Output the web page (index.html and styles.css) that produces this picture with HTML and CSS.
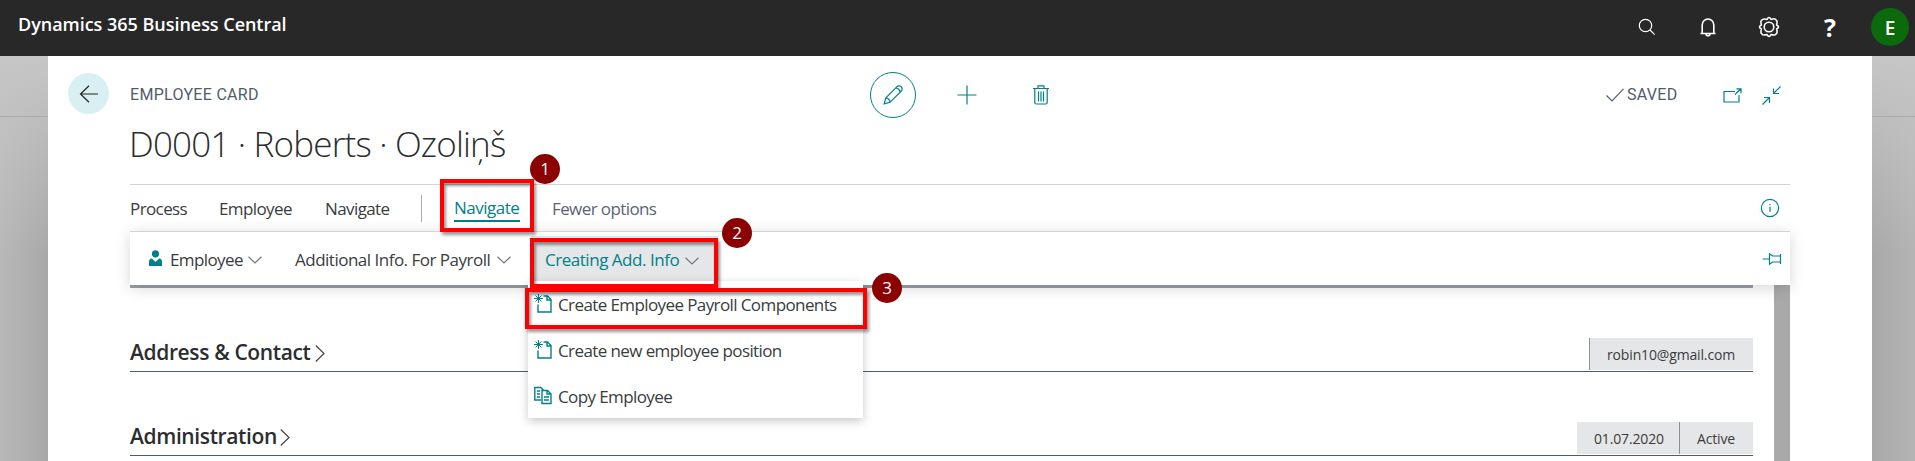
FILE: index.html
```
<!DOCTYPE html>
<html lang="en">
<head>
<meta charset="utf-8">
<title>Dynamics 365 Business Central</title>
<link rel="stylesheet" href="styles.css">
</head>
<body>
<header class="topbar">
  <span class="brand">Dynamics 365 Business Central</span>
  <div class="tools">
    <svg width="22" height="22" viewBox="0 0 22 22"><circle cx="9.5" cy="9.5" r="6.2"/><path d="M14 14l4.7 4.7"/></svg>
    <svg width="22" height="22" viewBox="0 0 22 22"><path class="bold" d="M3.500 17.500h15M5.200 17V9a5.800 6 0 0 1 11.600 0v8M9 17.800a2 2 0 0 0 4 0"/></svg>
    <svg width="22" height="22" viewBox="0 0 22 22"><circle class="bold" cx="11" cy="11" r="4.800"/><path class="bold" stroke-linejoin="round" d="M9 3.400Q11-.4 13 3.400 17.200 2 18 4 19.800 4.600 18.600 9 22.400 11 18.600 13 19.800 17.200 18 18 17.200 19.800 13 18.600 11 22.400 9 18.600 4.800 19.800 4 18 2.200 17.200 3.400 13-.4 11 3.400 9 2.200 4.800 4 4 4.800 2.200 9 3.400z"/></svg>
    <span class="help">?</span>
    <span class="avatar">E</span>
  </div>
</header>
<div class="backdrop">
  <main class="card">
    <div class="titlebar">
      <button class="back"><svg width="20" height="18" viewBox="0 0 20 18"><path d="M19 9H1.5M10 .7 1.5 9 10 17.3"/></svg></button>
      <span class="caption">EMPLOYEE CARD</span>
      <div class="actions">
        <span class="edit"><svg width="20" height="20" viewBox="0 0 20 20"><path d="M1.2 18.8 2.7 13 14 1.7a2.8 2.8 0 0 1 4 0l.3.3a2.8 2.8 0 0 1 0 4L7 17.3zM2.7 13c2.3 0 4.3 2 4.3 4.3M12.700 3c2.300 0 4.300 2 4.300 4.300"/></svg></span>
        <svg class="plus" width="20" height="20" viewBox="0 0 20 20"><path d="M10 .5v19M.5 10h19"/></svg>
        <svg class="trash" width="18" height="20" viewBox="0 0 18 20"><path d="M1 3.5h16M6 3V.8h6V3M2.8 4v13.5q0 1.5 1.5 1.5h9.4q1.5 0 1.5-1.5V4M6.5 6.5v10M9 6.5v10M11.500 6.500v10"/></svg>
      </div>
      <div class="status">
        <svg class="check" width="18" height="14" viewBox="0 0 18 14"><path d="M.5 7.500 6 13 17.500.8"/></svg>
        <span class="saved">SAVED</span>
        <svg class="popout" width="19" height="15" viewBox="0 0 19 15"><path d="M12 3.500H1v10.500h15V7M12 6.500 18 .8M13.500.8H18v4.500"/></svg>
        <svg class="collapse" width="19" height="19" viewBox="0 0 19 19"><path d="M18.500.5 11.500 7.500M11.500 2.500v5h5.500M.5 18.500l7-7M2 11.500h5.500v5.500"/></svg>
      </div>
    </div>
    <h1 class="name">D0001 · Roberts · Ozoliņš</h1>
    <nav class="menu">
      <span class="m1">Process</span><span class="m2">Employee</span><span class="m3">Navigate</span>
      <i class="divider"></i>
      <span class="active">Navigate<i class="mark mark-one"></i></span><span class="fewer">Fewer options</span>
      <svg class="info" width="20" height="20" viewBox="0 0 20 20"><circle cx="10" cy="10" r="8.600"/><path d="M10 8.700v5M10 6v1.300"/></svg>
    </nav>
    <div class="ribbon">
      <svg class="person" width="13" height="16" viewBox="0 0 13 16"><circle cx="6.500" cy="3.800" r="3.600"/><path d="M0 16v-4q0-3.500 3-3.500L6.500 12 10 8.500q3 0 3 3.500v4z"/></svg>
      <span class="r1">Employee</span>
      <svg class="chev c1" width="14" height="8" viewBox="0 0 14 8"><path d="M.5.7 7 7 13.500.7"/></svg>
      <span class="r2">Additional Info. For Payroll</span>
      <svg class="chev c2" width="14" height="8" viewBox="0 0 14 8"><path d="M.5.7 7 7 13.500.7"/></svg>
      <div class="open">
        <span class="r3">Creating Add. Info</span>
        <svg class="chev" width="14" height="8" viewBox="0 0 14 8"><path d="M.5.7 7 7 13.500.7"/></svg>
        <ul class="dropdown">
          <li><svg width="18" height="19" viewBox="0 0 18 19"><path d="M9.500 2h4L17 5.500V18H4v-7.500M13 2v4h4"/><path class="spark" d="M4.500 0v9M0 4.500h9M1.500 1.500l6 6M7.500 1.500l-6 6"/></svg><span>Create Employee Payroll Components</span></li>
          <li><svg width="18" height="19" viewBox="0 0 18 19"><path d="M9.500 2h4L17 5.500V18H4v-7.500M13 2v4h4"/><path class="spark" d="M4.500 0v9M0 4.500h9M1.500 1.500l6 6M7.500 1.500l-6 6"/></svg><span>Create new employee position</span></li>
          <li><svg width="18" height="19" viewBox="0 0 18 19"><path d="M7 14H.8V1.500h6l2.700 2.700M3 5h3M3 8h3M3 11h3M8 4.500h5.500L17 8v9.500H8zM13 4.500V8h4M10 11h5M10 14h5"/></svg><span>Copy Employee</span></li>
        </ul>
      </div>
      <svg class="pin" width="20" height="12" viewBox="0 0 20 12"><path d="M.5 6H7M7.500.8v10.400L10.500 9H18.500V3H10.500zM18.500 1v10"/></svg>
    </div>
    <div class="content">
      <div class="sections">
        <section class="group">
          <h2 class="g1">Address &amp; Contact</h2>
          <svg class="more" width="10" height="17" viewBox="0 0 10 17"><path d="M.8.5 9 8.500.8 16.500"/></svg>
          <div class="facts"><span class="fact lined mail">robin10@gmail.com</span></div>
        </section>
        <section class="group">
          <h2 class="g2">Administration</h2>
          <svg class="more" width="10" height="17" viewBox="0 0 10 17"><path d="M.8.5 9 8.500.8 16.500"/></svg>
          <div class="facts"><span class="fact date">01.07.2020</span><span class="fact lined state">Active</span></div>
        </section>
      </div>
      <div class="scrollbar"></div>
    </div>
  </main>
</div>
<i class="mark mark-two"></i>
<i class="mark mark-three"></i>
<span class="badge b1">1</span><span class="badge b2">2</span><span class="badge b3">3</span>
</body>
</html>
```
FILE: styles.css
```
* { box-sizing: border-box; }
body { margin: 0; height: 461px; overflow: hidden; position: relative; font-family: "Open Sans", "Noto Sans", sans-serif; font-size: 17px; color: #3a3c3e; }
svg { display: block; flex: none; fill: none; stroke: #008089; stroke-width: 1.2; }
span, h1, h2 { white-space: nowrap; }
.topbar { height: 56px; background: #282828; display: flex; align-items: center; justify-content: space-between; padding: 0 6px 0 18px; color: #fff; }
.brand { font-weight: 600; font-size: 18px; line-height: 24px; letter-spacing: -.03px; margin-bottom: 8px; }
.tools { display: flex; align-items: center; height: 54px; margin-bottom: 2px; }
.tools svg { stroke: #fff; stroke-width: 1.2; margin-right: 39px; }
.tools .bold { stroke-width: 1.600; }
.help { font-size: 25px; font-weight: 700; width: 14px; margin: 0 34px 0 4px; text-align: center; }
.avatar { width: 38px; height: 38px; border-radius: 50%; background: #0b6a0b; display: flex; align-items: center; justify-content: center; font-weight: 600; font-size: 19px; padding-top: 1px; }
.backdrop { height: 405px; padding: 0 43px 0 48px; background: linear-gradient(#0000 60px, #aaa 60px, #aaa 61px, #0000 61px), linear-gradient(#c6c6c6, #bcbcbc00 200px), linear-gradient(90deg, #b8b8b8, #a8a8a8 48px, #a8a8a8 1872px, #b4b4b4); }
.card { height: 405px; background: #fff; display: flex; flex-direction: column; }
.titlebar { height: 74px; display: flex; align-items: center; padding: 4px 91px 0 20px; flex: none; }
.back { width: 41px; height: 41px; border: 0; border-radius: 50%; background: #d8f0f2; display: flex; align-items: center; justify-content: center; padding: 0; margin-bottom: 3px; }
.back svg { stroke: #222; }
.caption { font-family: Roboto, sans-serif; font-size: 16px; letter-spacing: .3px; color: #505c6d; margin-left: 21px; width: 128px; margin-bottom: 1px; }
.actions { display: flex; align-items: center; margin-left: 612px; }
.edit { width: 46px; height: 46px; border: 1.500px solid #008089; border-radius: 50%; display: flex; align-items: center; justify-content: center; }
.plus { margin-left: 41px; }
.trash { margin-left: 55px; }
.status { display: flex; align-items: center; margin-left: auto; }
.check { stroke: #505c6d; }
.saved { font-family: Roboto, sans-serif; font-size: 16px; letter-spacing: .3px; color: #505c6d; margin-left: 3px; width: 50px; margin-bottom: 2px; }
.popout { margin-left: 46px; }
.collapse { margin-left: 20px; }
.name { margin: 0; padding-left: 81px; height: 54px; flex: none; font-weight: 300; font-size: 35px; line-height: 27px; letter-spacing: -.82px; color: #2b2d2f; }
.menu, .ribbon { letter-spacing: -.6px; }
.menu { margin: 0 82px; height: 47px; flex: none; border-top: 1px solid #d0d3d8; display: flex; align-items: center; }
.m1 { width: 89px; }
.m2 { width: 106px; }
.m3 { width: 96px; }
.divider { width: 1px; height: 27px; background: #a8adb6; margin-right: 32px; }
.active { color: #008089; width: 66px; border-bottom: 2px solid #008089; line-height: 26px; position: relative; letter-spacing: -.5px; padding-top: 1px; height: 28px; }
.fewer { margin-left: 32px; color: #5a6475; }
.info { margin-left: auto; margin-right: 10px; }
.ribbon { margin: 0 82px; height: 54px; flex: none; background: #fff; border-top: 1px solid #d0d3d8; box-shadow: 0 3px 14px rgba(0,0,0,.16); display: flex; align-items: center; padding-left: 19px; position: relative; z-index: 2; }
.person { fill: #008089; stroke: none; margin-bottom: 2px; }
.r1, .r2 { padding-top: 2px; }
.r1 { margin-left: 8px; width: 78px; }
.c1 { margin-right: 33px; }
.r2 { width: 202px; letter-spacing: -.5px; }
.c1, .c2 { margin-top: 3px; }
.c2 { margin-right: 20px; }
.chev { stroke: #72777d; }
.open { align-self: flex-end; width: 188px; height: 49px; background: #e5e6e8; display: flex; align-items: center; padding-left: 14px; color: #008089; position: relative; }
.r3 { width: 140px; letter-spacing: -.47px; padding-bottom: 2px; }
.dropdown { position: absolute; left: -3px; top: 45px; width: 335px; height: 137px; margin: 0; padding: 0 0 0 6px; list-style: none; background: #fff; box-shadow: 0 3px 9px rgba(0,0,0,.22); color: #3a3c3e; }
.dropdown li { display: flex; align-items: center; height: 46px; gap: 6px; }
.dropdown svg { stroke-width: 1.400; margin-bottom: 1px; }
.dropdown .spark { stroke-width: 1; }
.pin { margin-left: auto; margin-right: 8px; }
.content { flex: 1; margin: 0 82px; display: flex; justify-content: space-between; }
.sections { width: 1623px; border-top: 3px solid #9a9fa9; }
.group { height: 84px; border-bottom: 1px solid #505c6d; display: flex; align-items: flex-end; }
.group h2 { margin: 0; font-weight: 600; font-size: 21px; line-height: 28px; padding-bottom: 5px; letter-spacing: -.37px; color: #2b2d2f; }
.g1 { width: 185px; }
.g2 { width: 150px; }
.more { stroke: #444; margin-bottom: 9px; }
.facts { margin-left: auto; display: flex; padding-bottom: 1px; }
.fact { height: 32px; background: #e5e6e8; display: flex; align-items: center; font-size: 14px; letter-spacing: -.15px; padding-left: 17px; }
.lined { border-left: 1px solid #8d9096; }
.mail { width: 164px; }
.date { width: 102px; }
.state { width: 74px; }
.scrollbar { width: 16px; background: #a9a9a9; }
.mark { position: absolute; border: 4px solid #f00; box-shadow: 2px 3px 3px rgba(0,0,0,.4), inset 2px 3px 3px rgba(0,0,0,.4); z-index: 3; }
.mark-one { left: -14px; top: -15px; width: 94px; height: 53px; }
.mark-two { left: 530px; top: 238px; width: 188px; height: 50px; }
.mark-three { left: 525px; top: 288px; width: 342px; height: 41px; }
.badge { position: absolute; width: 30px; height: 30px; border-radius: 50%; background: #8b0000; color: #fff; font-size: 17px; line-height: 29px; text-align: center; z-index: 4; }
.b1 { left: 530px; top: 154px; }
.b2 { left: 722px; top: 218px; }
.b3 { left: 872px; top: 273px; }
```
